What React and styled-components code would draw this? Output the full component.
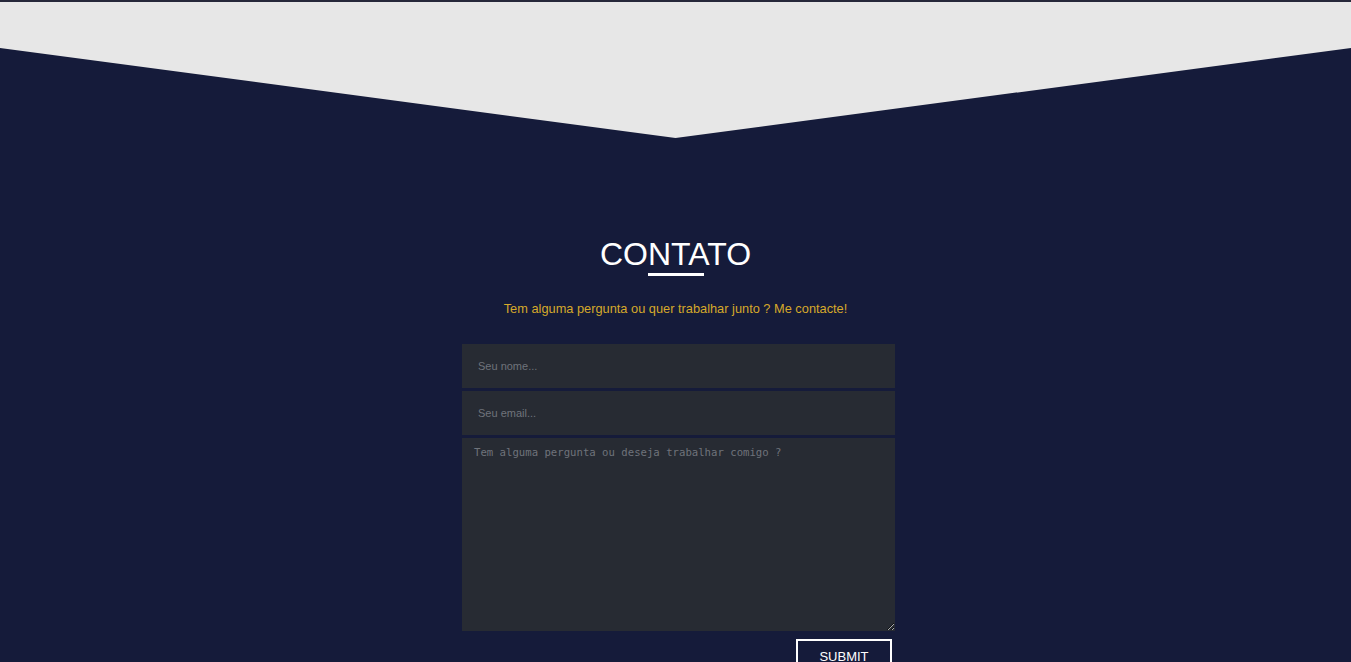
import React from "react";
import styled, { createGlobalStyle } from "styled-components";

const Global = createGlobalStyle`
  html, body {
    margin: 0;
    padding: 0;
    background: #151b3a;
    font-family: "Liberation Sans", Arial, sans-serif;
    overflow: hidden;
  }
  * { box-sizing: border-box; }
`;

const Page = styled.div`
  min-height: 662px;
  background: #151b3a;
`;

const Hero = styled.div`
  height: 138px;
  background: #e7e7e7;
  border-top: 2px solid #26283a;
  clip-path: polygon(0 0, 100% 0, 100% 48px, 50% 138px, 0 48px);
`;

const Section = styled.section`
  display: flex;
  flex-direction: column;
  align-items: center;
  padding-top: 101px;
`;

const Title = styled.h2`
  margin: 0;
  font-size: 32px;
  line-height: 30px;
  font-weight: 400;
  color: #ffffff;
`;

const Underline = styled.div`
  width: 56px;
  height: 3px;
  margin-top: 4px;
  background: #ffffff;
`;

const Subtitle = styled.p`
  margin: 25px 0 0;
  font-size: 12.8px;
  line-height: 15px;
  color: #d6a92a;
`;

const Form = styled.form`
  width: 439px;
  padding-left: 6px;
  margin-top: 28px;
  display: flex;
  flex-direction: column;
  gap: 3px;
`;

const Field = styled.input`
  width: 100%;
  height: 44px;
  border: none;
  outline: none;
  background: #272b33;
  padding: 0 16px;
  font-family: "Liberation Sans", Arial, sans-serif;
  font-size: 11px;
  color: #ddd;
  &::placeholder {
    color: #6f737b;
  }
`;

const Message = styled.textarea`
  width: 100%;
  height: 193px;
  border: none;
  outline: none;
  background: #272b33;
  padding: 8px 12px;
  font-family: "DejaVu Sans Mono", monospace;
  font-size: 10.65px;
  color: #ddd;
  resize: vertical;
  display: block;
  &::placeholder {
    color: #6f737b;
  }
`;

const Actions = styled.div`
  display: flex;
  justify-content: flex-end;
  padding-right: 3px;
  margin-top: 5px;
`;

const Submit = styled.button`
  width: 96px;
  padding: 8px 0;
  border: 2px solid #ffffff;
  background: transparent;
  color: #ffffff;
  font-family: "Liberation Sans", Arial, sans-serif;
  font-size: 13px;
  line-height: 15px;
  cursor: pointer;
`;

export default function App() {
  return (
    <Page>
      <Global />
      <Hero />
      <Section>
        <Title>CONTATO</Title>
        <Underline />
        <Subtitle>Tem alguma pergunta ou quer trabalhar junto ? Me contacte!</Subtitle>
        <Form onSubmit={(e) => e.preventDefault()}>
          <Field type="text" placeholder="Seu nome..." />
          <Field type="email" placeholder="Seu email..." />
          <Message placeholder="Tem alguma pergunta ou deseja trabalhar comigo ?" />
          <Actions>
            <Submit type="submit">SUBMIT</Submit>
          </Actions>
        </Form>
      </Section>
    </Page>
  );
}
